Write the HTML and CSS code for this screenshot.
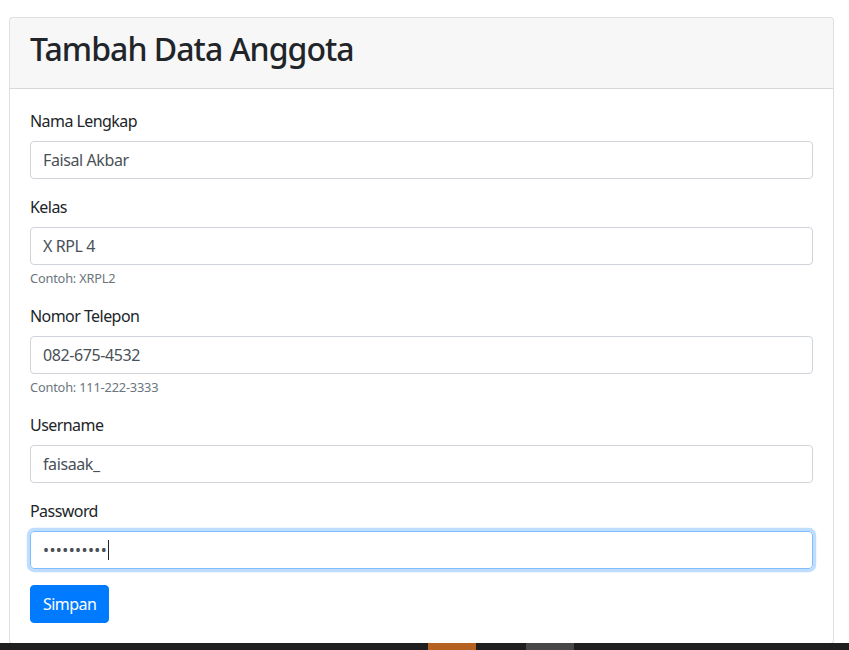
FILE: index.html
```html
<!DOCTYPE html>
<html lang="id">
<head>
<meta charset="utf-8">
<title>Tambah Data Anggota</title>
<link rel="stylesheet" href="styles.css">
</head>
<body>
<div class="page">
  <div class="card">
    <div class="card-header">
      <h2 class="title">Tambah Data Anggota</h2>
    </div>
    <form class="card-body">
      <div class="form-group">
        <label class="label">Nama Lengkap</label>
        <div class="control">Faisal Akbar</div>
      </div>
      <div class="form-group">
        <label class="label">Kelas</label>
        <div class="control">X RPL 4</div>
        <small class="hint">Contoh: XRPL2</small>
      </div>
      <div class="form-group">
        <label class="label">Nomor Telepon</label>
        <div class="control">082-675-4532</div>
        <small class="hint">Contoh: 111-222-3333</small>
      </div>
      <div class="form-group">
        <label class="label">Username</label>
        <div class="control">faisaak_</div>
      </div>
      <div class="form-group">
        <label class="label">Password</label>
        <div class="control focused"><span class="dots">••••••••••</span><span class="caret"></span></div>
      </div>
      <button type="button" class="btn">Simpan</button>
    </form>
  </div>
</div>
<div class="taskbar">
  <span class="task task-orange"></span>
  <span class="task task-gray"></span>
</div>
</body>
</html>
```

FILE: styles.css
```css
* { box-sizing: border-box; }
html, body {
  margin: 0;
  background: #fff;
}
body {
  font-family: "Segoe UI", "Noto Sans", "Open Sans", sans-serif;
  font-size: 16px;
  line-height: 1.5;
  color: #212529;
  letter-spacing: -0.035em;
}
.page {
  padding: 17px 15px 0 9px;
}
.card {
  border: 1px solid rgba(0,0,0,.125);
  border-radius: 4px;
  background: #fff;
  overflow: hidden;
}
.card-header {
  background: rgba(0,0,0,.03);
  border-bottom: 1px solid rgba(0,0,0,.125);
  padding: 12px 20px;
}
.title {
  margin: 0 0 8px;
  font-size: 32px;
  font-weight: 500;
  line-height: 1.2;
  letter-spacing: -0.03em;
}
.card-body {
  padding: 20px;
  display: flex;
  flex-direction: column;
  align-items: flex-start;
}
.form-group {
  display: flex;
  flex-direction: column;
  width: 100%;
  margin-bottom: 16px;
}
.label {
  margin-bottom: 8px;
}
.control {
  height: 38px;
  padding: 6px 12px;
  border: 1px solid #ced4da;
  border-radius: 4px;
  color: #495057;
  display: flex;
  align-items: center;
  white-space: nowrap;
  letter-spacing: -0.025em;
}
.control.focused {
  border-color: #80bdff;
  box-shadow: 0 0 0 3.2px rgba(0,123,255,.25);
}
.dots {
  font-size: 16px;
  letter-spacing: 0.4px;
}
.caret {
  display: inline-block;
  width: 1px;
  height: 20px;
  background: #212529;
  margin-left: 1px;
}
.hint {
  margin-top: 4px;
  font-size: 12.8px;
  line-height: 19px;
  height: 19px;
  color: #6c757d;
  letter-spacing: -0.015em;
}
.btn {
  font-family: inherit;
  font-size: 16px;
  line-height: 1.5;
  letter-spacing: -0.035em;
  color: #fff;
  background: #007bff;
  border: 1px solid #007bff;
  border-radius: 4px;
  padding: 6px 12px;
  height: 38px;
}
.taskbar {
  position: fixed;
  left: 0;
  right: 0;
  bottom: 0;
  height: 7px;
  background: #1f1f1f;
  display: flex;
  padding-left: 428px;
  gap: 50px;
}
.task {
  width: 48px;
  height: 100%;
}
.task-orange { background: #b3621f; }
.task-gray { background: #474747; }
```
